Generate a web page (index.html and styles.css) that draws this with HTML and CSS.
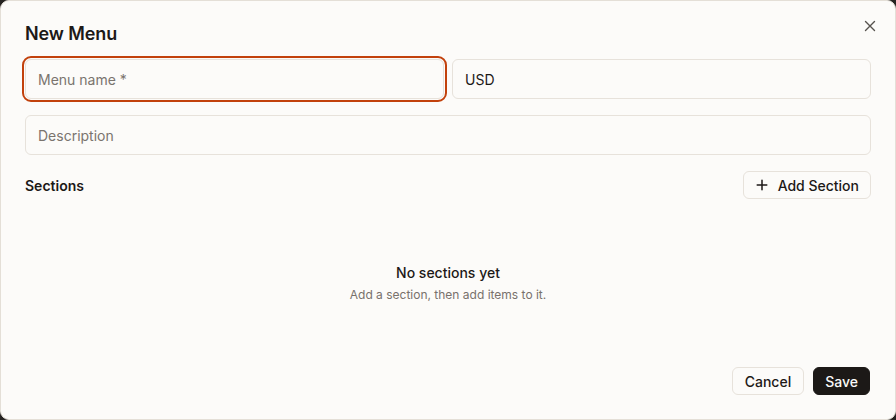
FILE: index.html
```html
<!DOCTYPE html>
<html lang="en">
<head>
<meta charset="utf-8">
<title>New Menu</title>
<link rel="stylesheet" href="styles.css">
</head>
<body>
<div class="dialog" role="dialog" aria-labelledby="dlg-title">
  <button class="close" aria-label="Close">
    <svg width="16" height="16" viewBox="0 0 16 16" fill="none" stroke="currentColor" stroke-width="1.4" stroke-linecap="round"><path d="M3.5 3.5l9 9M12.5 3.5l-9 9"/></svg>
  </button>
  <h2 id="dlg-title" class="title">New Menu</h2>
  <div class="fields">
    <div class="row two">
      <input class="input focused" type="text" placeholder="Menu name *">
      <input class="input" type="text" value="USD">
    </div>
    <input class="input" type="text" placeholder="Description">
  </div>
  <div class="sections-head">
    <span class="sections-label">Sections</span>
    <button class="btn outline add">
      <svg width="14" height="14" viewBox="0 0 14 14" fill="none" stroke="currentColor" stroke-width="1.5" stroke-linecap="round"><path d="M7 2.2v9.6M2.2 7h9.6"/></svg>
      <span>Add Section</span>
    </button>
  </div>
  <div class="empty">
    <div class="empty-title">No sections yet</div>
    <div class="empty-sub">Add a section, then add items to it.</div>
  </div>
  <div class="footer">
    <button class="btn outline cancel">Cancel</button>
    <button class="btn primary">Save</button>
  </div>
</div>
</body>
</html>
```
FILE: styles.css
```css
* { box-sizing: border-box; }
html, body { margin: 0; height: 100%; }
body {
  background: #262422;
  font-family: Inter, "Noto Sans", "Liberation Sans", sans-serif;
  color: #1c1917;
}
.dialog {
  position: relative;
  height: 420px;
  width: 896px;
  background: #fcfbf9;
  border: 1px solid #e4dfd7;
  border-radius: 9px;
  padding: 21px 24px 24px;
  display: flex;
  flex-direction: column;
}
.close {
  position: absolute;
  top: 17px;
  right: 17px;
  width: 16px;
  height: 16px;
  padding: 0;
  border: 0;
  background: none;
  color: #57534e;
  display: flex;
  cursor: pointer;
}
.title {
  margin: 0;
  font-size: 18px;
  line-height: 24px;
  font-weight: 600;
  letter-spacing: -0.1px;
}
.fields {
  margin-top: 13px;
  display: flex;
  flex-direction: column;
  gap: 16px;
}
.row.two {
  display: grid;
  grid-template-columns: 1fr 1fr;
  gap: 8px;
}
.input {
  height: 40px;
  width: 100%;
  border: 1px solid #e7e2db;
  border-radius: 6px;
  background: #fcfbf9;
  padding: 0 12px;
  font-family: inherit;
  font-size: 14px;
  color: #1c1917;
  outline: none;
}
.input::placeholder { color: #7a746e; }
.input.focused {
  outline: 2px solid #c2410c;
  outline-offset: 1px;
}
.sections-head {
  margin-top: 16px;
  display: flex;
  align-items: center;
  justify-content: space-between;
  height: 28px;
}
.sections-label {
  font-size: 14px;
  font-weight: 600;
}
.btn {
  height: 28px;
  padding: 0 11px;
  border-radius: 6px;
  font-family: inherit;
  font-size: 14px;
  font-weight: 500;
  display: inline-flex;
  align-items: center;
  gap: 8px;
  cursor: pointer;
}
.btn.add { gap: 9px; }
.btn.cancel { padding: 0 12px; }
.btn.outline {
  background: #fcfbf9;
  border: 1px solid #e7e2db;
  color: #1c1917;
}
.btn.primary {
  background: #1c1917;
  border: 1px solid #1c1917;
  color: #fafaf9;
}
.empty {
  margin-top: 64px;
  display: flex;
  flex-direction: column;
  align-items: center;
  gap: 4px;
}
.empty-title {
  font-size: 14px;
  line-height: 20px;
  font-weight: 500;
}
.empty-sub {
  font-size: 12px;
  line-height: 16px;
  color: #78716c;
}
.footer {
  margin-top: auto;
  display: flex;
  justify-content: flex-end;
  gap: 9px;
  padding-right: 1px;
}
```
